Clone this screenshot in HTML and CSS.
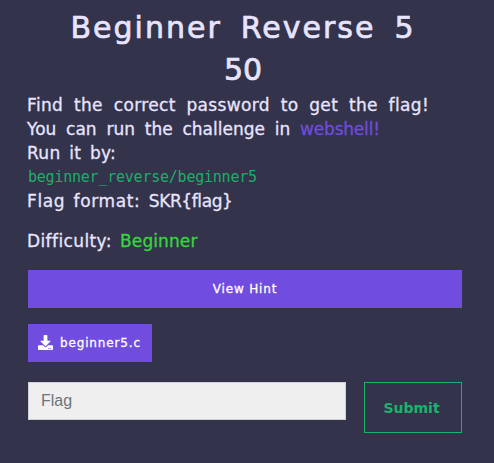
FILE: index.html
```html
<!DOCTYPE html>
<html lang="en">
<head>
<meta charset="utf-8">
<title>Beginner Reverse 5</title>
<link rel="stylesheet" href="styles.css">
</head>
<body>
<main class="challenge">
  <h3 class="name">Beginner Reverse 5</h3>
  <h4 class="value">50</h4>
  <div class="desc">
    <div class="line line-find">Find the correct password to get the flag!</div>
    <div class="line line-run">You can run the challenge in <a class="link">webshell!</a></div>
    <div class="line line-by">Run it by:</div>
    <code class="line code">beginner_reverse/beginner5</code>
    <div class="line line-format">Flag format: <span class="format">SKR{flag}</span></div>
    <div class="line difficulty">Difficulty: <span class="level">Beginner</span></div>
  </div>
  <button class="btn hint"><span>View Hint</span></button>
  <button class="btn file">
    <svg class="icon" viewBox="0 0 512 512"><path fill="currentColor" d="M216 0h80c13 0 24 11 24 24v168h88c18 0 27 21 14 34L270 378c-8 8-20 8-28 0L90 226c-13-13-4-34 14-34h88V24c0-13 11-24 24-24zm296 376v112c0 13-11 24-24 24H24c-13 0-24-11-24-24V376c0-13 11-24 24-24h147l49 49c20 20 52 20 72 0l49-49h147c13 0 24 11 24 24zM388 464c0-11-9-20-20-20s-20 9-20 20 9 20 20 20 20-9 20-20zm64 0c0-11-9-20-20-20s-20 9-20 20 9 20 20 20 20-9 20-20z"/></svg>
    <span>beginner5.c</span>
  </button>
  <div class="submit-row">
    <input class="flag" type="text" placeholder="Flag">
    <button class="submit"><span>Submit</span></button>
  </div>
</main>
</body>
</html>
```
FILE: styles.css
```css
* { box-sizing: border-box; }
body {
  margin: 0;
  background: #33334b;
  color: #e8e4ff;
  font-family: "DejaVu Sans", sans-serif;
  overflow: hidden;
}
.challenge { padding: 7px 32px 0 28px; }
.name, .value {
  margin: 0;
  height: 42px;
  line-height: 42px;
  font-size: 30px;
  font-weight: 400;
  text-align: center;
  white-space: nowrap;
  -webkit-text-stroke: 0.7px currentColor;
}
.name { letter-spacing: 2px; word-spacing: 7.5px; margin-left: -4px; }
.value { margin-left: -4px; }
.desc { margin: 2px 0 0 -1px; }
.line {
  display: block;
  height: 24px;
  line-height: 25px;
  font-size: 17px;
  white-space: nowrap;
  -webkit-text-stroke: 0.3px currentColor;
}
.line-find { letter-spacing: 0.35px; word-spacing: 5px; }
.line-run { word-spacing: 4.4px; }
.link { color: #704cdb; letter-spacing: -0.2px; }
.line-by { letter-spacing: 0.3px; word-spacing: 3px; }
.code {
  font-family: "DejaVu Sans Mono", monospace;
  font-size: 15px;
  letter-spacing: -0.23px;
  color: #1fad69;
  padding-left: 1px;
  -webkit-text-stroke: 0;
}
.line-format { letter-spacing: 0.6px; word-spacing: 2.5px; }
.format { letter-spacing: -0.4px; }
.difficulty { margin-top: 16px; letter-spacing: 0.4px; word-spacing: 2.3px; }
.level { color: #37d63e; letter-spacing: 0.1px; }
.btn {
  display: flex;
  align-items: center;
  justify-content: center;
  height: 38px;
  margin: 0;
  padding: 0;
  border: 0;
  background: #704cdf;
  color: #fff;
  font: 12px "DejaVu Sans", sans-serif;
  letter-spacing: 0.85px;
  -webkit-text-stroke: 0.3px currentColor;
}
.hint { width: 434px; margin-top: 17px; }
.file { width: 124px; margin-top: 16px; padding-left: 10px; gap: 7px; justify-content: flex-start; }
.icon { flex: none; width: 15px; height: 15px; margin-bottom: 2px; }
.submit-row { display: flex; align-items: flex-start; gap: 18px; margin-top: 20px; }
.flag {
  width: 318px;
  height: 38px;
  padding: 0 12px;
  border: 1px solid #ced0da;
  background: #efefef;
  font: 16px "Liberation Sans", sans-serif;
}
.flag::placeholder { color: #6c757d; opacity: 1; }
.submit {
  width: 98px;
  height: 51px;
  padding: 0 3px 0 0;
  border: 1px solid #1bb36b;
  background: transparent;
  color: #1bb36b;
  font: bold 14px "DejaVu Sans", sans-serif;
}
```
